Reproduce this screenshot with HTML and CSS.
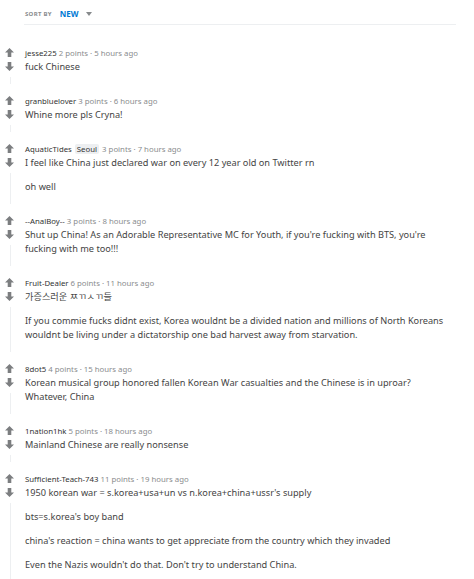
FILE: index.html
```html
<!DOCTYPE html>
<html lang="en">
<head>
  <meta charset="UTF-8">
  <title>Comments</title>
  <link rel="stylesheet" href="styles.css">
</head>
<body>

  <div class="sort-bar">
    <span class="sort-label">SORT BY</span>
    <span class="sort-value">NEW</span>
    <svg class="caret" width="6" height="4" viewBox="0 0 6 4"><path d="M0 0H6L3 4Z" fill="#878a8c"/></svg>
  </div>

  <div class="comments">

    <div class="comment">
      <div class="votes">
        <svg class="arrow" viewBox="0 0 10 10"><path d="M5 0L10 5H7V10H3V5H0Z"/></svg>
        <svg class="arrow" viewBox="0 0 10 10"><path d="M5 10L10 5H7V0H3V5H0Z"/></svg>
        <div class="thread"></div>
      </div>
      <div class="body">
        <div class="meta"><span class="author">jesse225</span> 2 points · 5 hours ago</div>
        <p>fuck Chinese</p>
      </div>
    </div>

    <div class="comment">
      <div class="votes">
        <svg class="arrow" viewBox="0 0 10 10"><path d="M5 0L10 5H7V10H3V5H0Z"/></svg>
        <svg class="arrow" viewBox="0 0 10 10"><path d="M5 10L10 5H7V0H3V5H0Z"/></svg>
        <div class="thread"></div>
      </div>
      <div class="body">
        <div class="meta"><span class="author">granbluelover</span> 3 points · 6 hours ago</div>
        <p>Whine more pls Cryna!</p>
      </div>
    </div>

    <div class="comment">
      <div class="votes">
        <svg class="arrow" viewBox="0 0 10 10"><path d="M5 0L10 5H7V10H3V5H0Z"/></svg>
        <svg class="arrow" viewBox="0 0 10 10"><path d="M5 10L10 5H7V0H3V5H0Z"/></svg>
        <div class="thread"></div>
      </div>
      <div class="body">
        <div class="meta"><span class="author">AquaticTides</span> <span class="flair">Seoul</span> 3 points · 7 hours ago</div>
        <p>I feel like China just declared war on every 12 year old on Twitter rn</p>
        <p>oh well</p>
      </div>
    </div>

    <div class="comment">
      <div class="votes">
        <svg class="arrow" viewBox="0 0 10 10"><path d="M5 0L10 5H7V10H3V5H0Z"/></svg>
        <svg class="arrow" viewBox="0 0 10 10"><path d="M5 10L10 5H7V0H3V5H0Z"/></svg>
        <div class="thread"></div>
      </div>
      <div class="body">
        <div class="meta"><span class="author">--AnalBoy--</span> 3 points · 8 hours ago</div>
        <p>Shut up China! As an Adorable Representative MC for Youth, if you're fucking with BTS, you're fucking with me too!!!</p>
      </div>
    </div>

    <div class="comment">
      <div class="votes">
        <svg class="arrow" viewBox="0 0 10 10"><path d="M5 0L10 5H7V10H3V5H0Z"/></svg>
        <svg class="arrow" viewBox="0 0 10 10"><path d="M5 10L10 5H7V0H3V5H0Z"/></svg>
        <div class="thread"></div>
      </div>
      <div class="body">
        <div class="meta"><span class="author">Fruit-Dealer</span> 6 points · 11 hours ago</div>
        <p>가증스러운 ㅉㄲㅅㄲ들</p>
        <p>If you commie fucks didnt exist, Korea wouldnt be a divided nation and millions of North Koreans wouldnt be living under a dictatorship one bad harvest away from starvation.</p>
      </div>
    </div>

    <div class="comment">
      <div class="votes">
        <svg class="arrow" viewBox="0 0 10 10"><path d="M5 0L10 5H7V10H3V5H0Z"/></svg>
        <svg class="arrow" viewBox="0 0 10 10"><path d="M5 10L10 5H7V0H3V5H0Z"/></svg>
        <div class="thread"></div>
      </div>
      <div class="body">
        <div class="meta"><span class="author">8dot5</span> 4 points · 15 hours ago</div>
        <p>Korean musical group honored fallen Korean War casualties and the Chinese is in uproar? Whatever, China</p>
      </div>
    </div>

    <div class="comment">
      <div class="votes">
        <svg class="arrow" viewBox="0 0 10 10"><path d="M5 0L10 5H7V10H3V5H0Z"/></svg>
        <svg class="arrow" viewBox="0 0 10 10"><path d="M5 10L10 5H7V0H3V5H0Z"/></svg>
        <div class="thread"></div>
      </div>
      <div class="body">
        <div class="meta"><span class="author">1nation1hk</span> 5 points · 18 hours ago</div>
        <p>Mainland Chinese are really nonsense</p>
      </div>
    </div>

    <div class="comment">
      <div class="votes">
        <svg class="arrow" viewBox="0 0 10 10"><path d="M5 0L10 5H7V10H3V5H0Z"/></svg>
        <svg class="arrow" viewBox="0 0 10 10"><path d="M5 10L10 5H7V0H3V5H0Z"/></svg>
        <div class="thread"></div>
      </div>
      <div class="body">
        <div class="meta"><span class="author">Sufficient-Teach-743</span> 11 points · 19 hours ago</div>
        <p>1950 korean war = s.korea+usa+un vs n.korea+china+ussr's supply</p>
        <p>bts=s.korea's boy band</p>
        <p>china's reaction = china wants to get appreciate from the country which they invaded</p>
        <p>Even the Nazis wouldn't do that. Don't try to understand China.</p>
      </div>
    </div>

  </div>

</body>
</html>
```

FILE: styles.css
```css
body {
  font-family: "Noto Sans", "Noto Sans CJK KR", sans-serif;
  margin: 0;
  background-color: #fff;
  color: #444;
}
.sort-bar {
  margin: 0 18px 0 24px;
  height: 25px;
  display: flex;
  align-items: center;
  border-bottom: 1px solid #edeff1;
  padding-left: 1px;
  padding-top: 3px;
  box-sizing: border-box;
}
.sort-label {
  font-size: 6px;
  font-weight: bold;
  letter-spacing: 0.3px;
  color: #8a8c8e;
}
.sort-value {
  font-size: 8px;
  font-weight: bold;
  color: #0079d3;
  margin-left: 8px;
}
.caret {
  margin-left: 7px;
}
.comments {
  padding-top: 21px;
}
.comment {
  display: flex;
  margin-bottom: 10px;
}
.votes {
  width: 25px;
  flex-shrink: 0;
  display: flex;
  flex-direction: column;
  align-items: center;
  padding-top: 2px;
  box-sizing: border-box;
}
.arrow {
  width: 9px;
  height: 9px;
  fill: #7c7e80;
  margin-bottom: 5px;
  margin-left: -7px;
}
.thread {
  flex: 1;
  width: 1px;
  background-color: #edeff1;
  margin-left: -5px;
  margin-top: 1px;
}
.body {
  flex: 1;
  padding-right: 22px;
  padding-bottom: 10px;
}
.meta {
  font-size: 7.8px;
  line-height: 14px;
  color: #8a8c8e;
}
.author {
  color: #333;
}
.flair {
  background-color: #edeff1;
  color: #333;
  padding: 0 2px;
  border-radius: 2px;
  margin: 0 1px;
}
.body p {
  font-size: 9.2px;
  line-height: 14px;
  margin: 0 0 10px;
}
.body p:last-child {
  margin-bottom: 0;
}
```
